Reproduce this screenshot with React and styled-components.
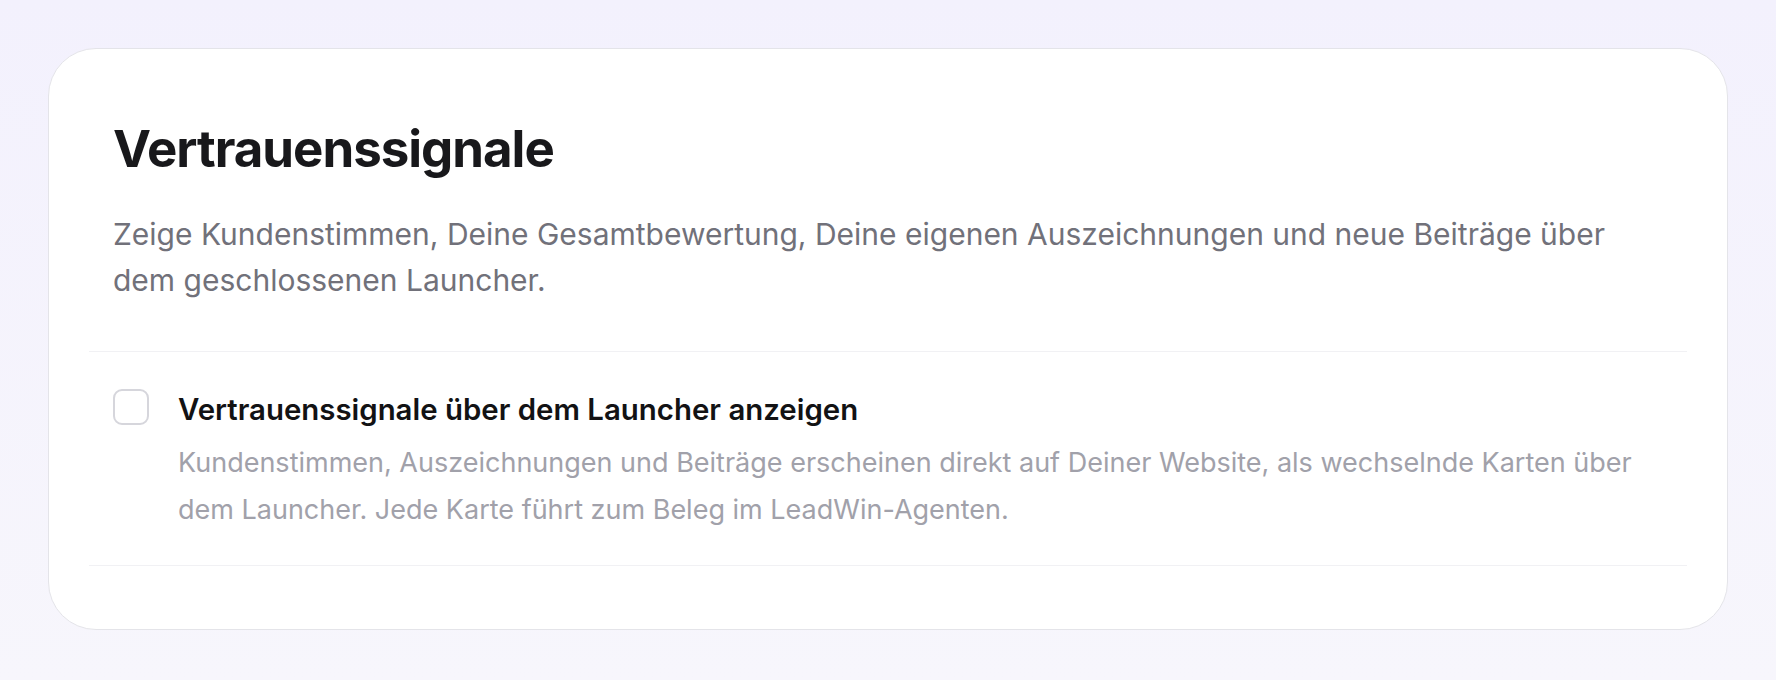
import React, { useState } from "react";
import styled, { createGlobalStyle } from "styled-components";

const GlobalStyle = createGlobalStyle`
  html, body {
    margin: 0;
    padding: 0;
  }
  body {
    font-family: Inter, "Noto Sans", sans-serif;
    background: linear-gradient(180deg, #f3f1fd 0%, #f7f6fc 100%);
    min-height: 680px;
    -webkit-font-smoothing: antialiased;
  }
`;

const Page = styled.main`
  padding: 48px;
  box-sizing: border-box;
`;

const Card = styled.section`
  background: #ffffff;
  border: 1px solid #e4e4e9;
  border-radius: 48px;
  padding: 40px 40px 63px;
`;

const Header = styled.header`
  padding: 30px 24px 48px;
`;

const Title = styled.h1`
  margin: 0;
  font-size: 51px;
  line-height: 60px;
  font-weight: 700;
  letter-spacing: -0.02em;
  color: #18181b;
`;

const Lead = styled.p`
  margin: 32px 0 0;
  font-size: 30px;
  line-height: 46px;
  color: #71717a;
  max-width: 1520px;
`;

const OptionRow = styled.label`
  display: flex;
  align-items: flex-start;
  gap: 29px;
  padding: 40px 24px 32px;
  border-top: 1px solid #f1f1f4;
  border-bottom: 1px solid #f1f1f4;
  cursor: pointer;
`;

const Box = styled.span`
  flex: none;
  width: 36px;
  height: 36px;
  margin-top: -3px;
  box-sizing: border-box;
  border: 2px solid #d6d6dc;
  border-radius: 9px;
  background: ${(p) => (p.$checked ? "#6d5dfc" : "#ffffff")};
  display: flex;
  align-items: center;
  justify-content: center;
`;

const OptionText = styled.span`
  display: flex;
  flex-direction: column;
  gap: 11px;
`;

const OptionTitle = styled.span`
  font-size: 29.4px;
  line-height: 36px;
  font-weight: 600;
  color: #121214;
`;

const OptionHint = styled.span`
  font-size: 27px;
  line-height: 47px;
  color: #a1a1aa;
  max-width: 1490px;
`;

const HiddenInput = styled.input`
  position: absolute;
  opacity: 0;
  pointer-events: none;
`;

export default function App() {
  const [enabled, setEnabled] = useState(false);
  return (
    <>
      <GlobalStyle />
      <Page>
        <Card>
          <Header>
            <Title>Vertrauenssignale</Title>
            <Lead>
              Zeige Kundenstimmen, Deine Gesamtbewertung, Deine eigenen
              Auszeichnungen und neue Beiträge über dem geschlossenen Launcher.
            </Lead>
          </Header>
          <OptionRow>
            <HiddenInput
              type="checkbox"
              checked={enabled}
              onChange={(e) => setEnabled(e.target.checked)}
            />
            <Box $checked={enabled}>
              {enabled && (
                <svg width="20" height="20" viewBox="0 0 24 24" fill="none">
                  <path
                    d="M5 12.5l4.5 4.5L19 7.5"
                    stroke="#fff"
                    strokeWidth="3"
                    strokeLinecap="round"
                    strokeLinejoin="round"
                  />
                </svg>
              )}
            </Box>
            <OptionText>
              <OptionTitle>Vertrauenssignale über dem Launcher anzeigen</OptionTitle>
              <OptionHint>
                Kundenstimmen, Auszeichnungen und Beiträge erscheinen direkt auf
                Deiner Website, als wechselnde Karten über dem Launcher. Jede
                Karte führt zum Beleg im LeadWin-Agenten.
              </OptionHint>
            </OptionText>
          </OptionRow>
        </Card>
      </Page>
    </>
  );
}
